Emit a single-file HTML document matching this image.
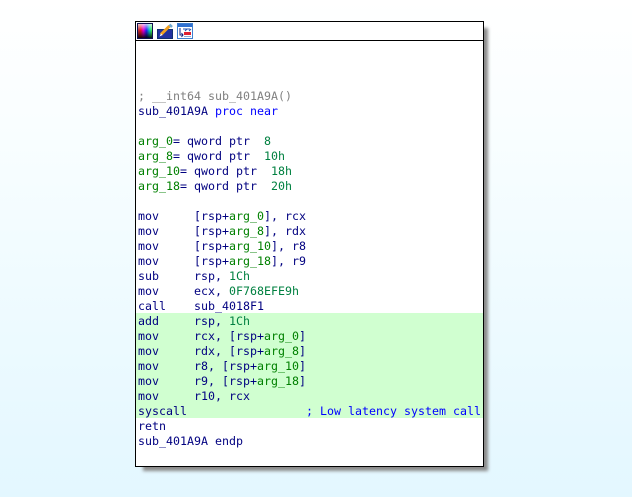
<!DOCTYPE html>
<html>
<head>
<meta charset="utf-8">
<style>
html,body{margin:0;padding:0;width:632px;height:497px;overflow:hidden}
body{position:relative;background:linear-gradient(to bottom,#ffffff 0,#f9feff 25%,#e3f7ff 100%)}
#shadow{position:absolute;left:143px;top:28px;width:345px;height:443px;background:#8a8a8a;filter:blur(1.5px)}
#box{position:absolute;left:135px;top:21px;width:347px;height:444px;background:#fff;border:1px solid #000}
#sep{position:absolute;left:136px;top:40px;width:347px;height:1px;background:#000}
#band{position:absolute;left:136px;top:313px;width:347px;height:105px;background:#d0ffd0}
pre{position:absolute;left:138px;top:89px;margin:0;font:11.63px/15px "DejaVu Sans Mono",monospace;color:#000080;white-space:pre}
.g{color:#008000}.n{color:#008040}.b{color:#0000ff}.c{color:#808080}
svg{position:absolute;top:23px}
</style>
</head>
<body>
<div id="shadow"></div>
<div id="box"></div>
<div id="sep"></div>
<div id="band"></div>
<svg style="left:137px" width="17" height="17" viewBox="0 0 17 17">
<defs>
<linearGradient id="h" x1="0" x2="1" y1="0" y2="0"><stop offset="0" stop-color="#a04040"/><stop offset=".2" stop-color="#f01020"/><stop offset=".4" stop-color="#e000e0"/><stop offset=".6" stop-color="#2020f0"/><stop offset=".8" stop-color="#00d0c0"/><stop offset="1" stop-color="#60f020"/></linearGradient>
<linearGradient id="v" x1="0" x2="0" y1="0" y2="1"><stop offset="0" stop-color="#fff" stop-opacity=".8"/><stop offset=".45" stop-color="#fff" stop-opacity="0"/><stop offset=".45" stop-color="#000" stop-opacity="0"/><stop offset="1" stop-color="#000" stop-opacity=".95"/></linearGradient>
</defs>
<rect x=".5" y=".5" width="15" height="15" fill="url(#h)"/>
<rect x=".5" y=".5" width="15" height="15" fill="url(#v)" stroke="#101050"/>
</svg>
<svg style="left:157px" width="17" height="17" viewBox="0 0 17 17">
<rect x=".5" y="6.500" width="15" height="9" fill="#2030a0" stroke="#103070"/>
<path d="M4 11.500L12.500 3" stroke="#f0a020" stroke-width="3"/>
<path d="M2.500 13.500L4 10.500L5.500 12Z" fill="#fff"/>
<path d="M12.500 1.500L15 4" stroke="#70a8d0" stroke-width="2.500"/>
</svg>
<svg style="left:177px" width="16" height="17" viewBox="0 0 16 17">
<rect x=".5" y=".5" width="15" height="15" fill="#fff" stroke="#4080d0"/>
<rect x="1" y="1" width="14" height="3" fill="#3070d0"/>
<path d="M3 5V12H6M4.500 10L6 12L4.500 14" fill="none" stroke="#102080"/>
<path d="M6 6H13M8 8L10 6M12 8L14 6" fill="none" stroke="#2050b0"/>
<rect x="7" y="9" width="7" height="3" fill="#e02030"/>
<path d="M7 13.500H14" stroke="#90a8d0"/>
</svg>
<pre><span class="c">; __int64 sub_401A9A()</span>
sub_401A9A <span class="b">proc near</span>

<span class="g">arg_0</span>= qword ptr  <span class="n">8</span>
<span class="g">arg_8</span>= qword ptr  <span class="n">10h</span>
<span class="g">arg_10</span>= qword ptr  <span class="n">18h</span>
<span class="g">arg_18</span>= qword ptr  <span class="n">20h</span>

mov     [rsp+<span class="g">arg_0</span>], rcx
mov     [rsp+<span class="g">arg_8</span>], rdx
mov     [rsp+<span class="g">arg_10</span>], r8
mov     [rsp+<span class="g">arg_18</span>], r9
sub     rsp, <span class="n">1Ch</span>
mov     ecx, <span class="n">0F768EFE9h</span>
call    sub_4018F1
add     rsp, <span class="n">1Ch</span>
mov     rcx, [rsp+<span class="g">arg_0</span>]
mov     rdx, [rsp+<span class="g">arg_8</span>]
mov     r8, [rsp+<span class="g">arg_10</span>]
mov     r9, [rsp+<span class="g">arg_18</span>]
mov     r10, rcx
syscall                 <span class="b">; Low latency system call</span>
retn
sub_401A9A endp</pre>
</body>
</html>
